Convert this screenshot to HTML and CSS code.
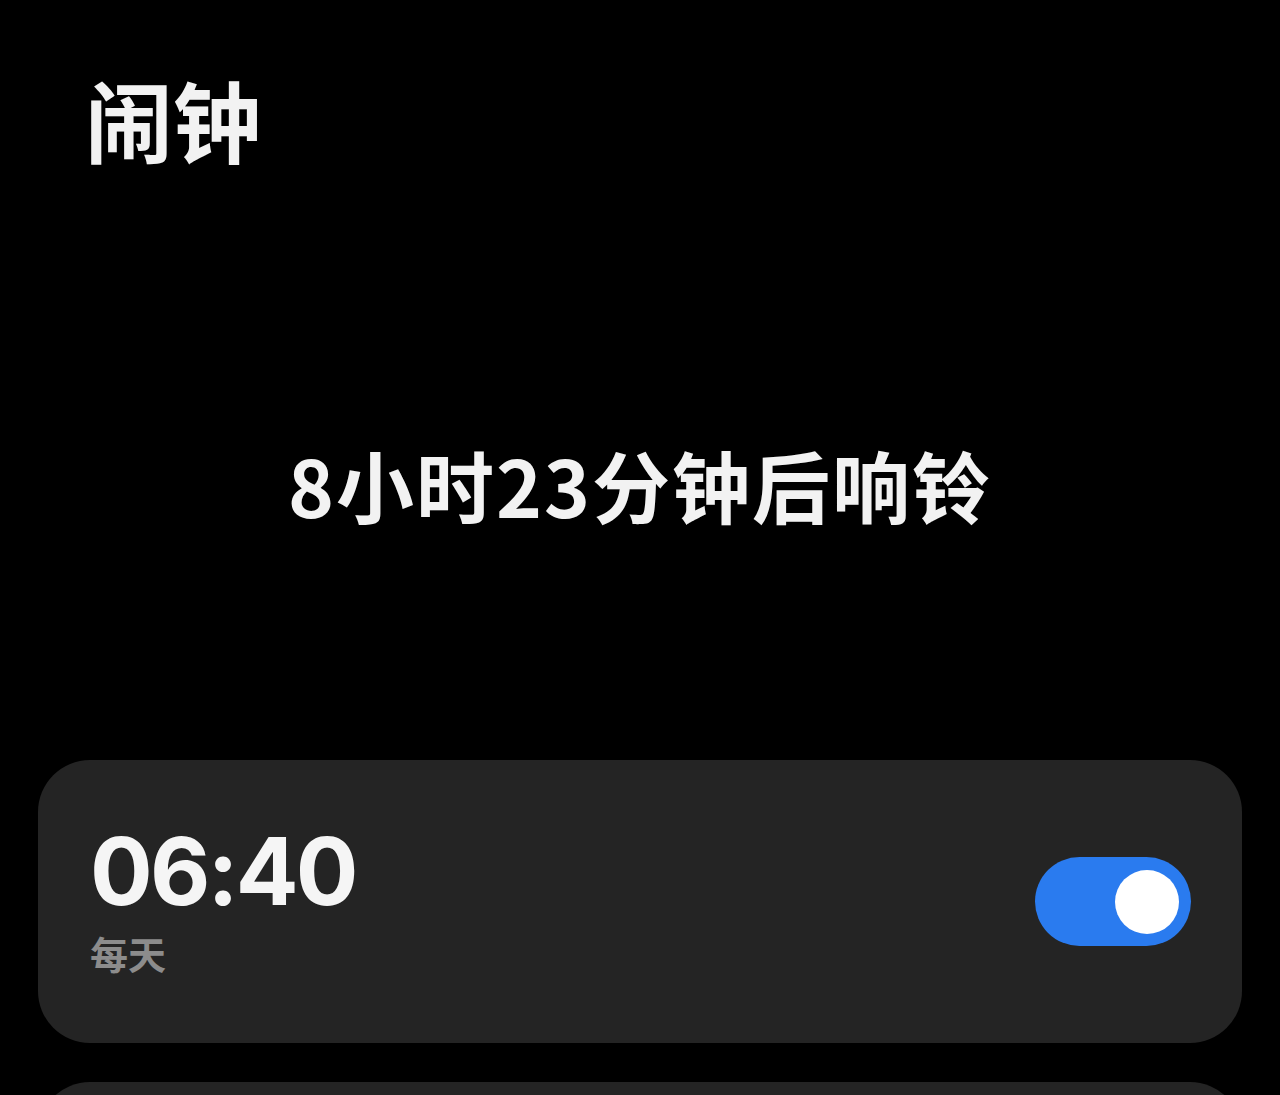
FILE: index.html
```html
<!DOCTYPE html>
<html lang="zh-CN">
<head>
<meta charset="utf-8">
<title>闹钟</title>
<link rel="stylesheet" href="styles.css">
</head>
<body>
<div class="page">
  <h1 class="title">闹钟</h1>
  <div class="countdown">8小时23分钟后响铃</div>
  <div class="list">
    <div class="card">
      <div class="info">
        <div class="time">06:40</div>
        <div class="repeat">每天</div>
      </div>
      <div class="switch on"><span class="knob"></span></div>
    </div>
    <div class="card next"></div>
  </div>
</div>
</body>
</html>
```
FILE: styles.css
```css
html, body {
  margin: 0;
  padding: 0;
  background: #000;
  height: 100%;
  overflow: hidden;
}
.page {
  font-family: "Noto Sans CJK SC", "Noto Sans", sans-serif;
  color: #f2f2f2;
  display: flex;
  flex-direction: column;
}
.title {
  margin: 0;
  padding: 56px 0 0 85px;
  font-size: 88px;
  line-height: 124px;
  font-weight: 700;
  height: 124px;
}
.countdown {
  margin-top: 254px;
  text-align: center;
  font-size: 78px;
  line-height: 100px;
  font-weight: 700;
  letter-spacing: 2px;
  height: 100px;
}
.list {
  margin-top: 226px;
  padding: 0 38px;
  display: flex;
  flex-direction: column;
  gap: 39px;
}
.card {
  background: #242424;
  border-radius: 52px;
  height: 283px;
  display: flex;
  align-items: center;
  justify-content: space-between;
  padding: 0 51px 0 52px;
  box-sizing: border-box;
}
.info {
  display: flex;
  flex-direction: column;
  margin-top: -8px;
}
.time {
  font-family: Inter, "Noto Sans", sans-serif;
  font-weight: 700;
  font-size: 93px;
  line-height: 100px;
  letter-spacing: -2.8px;
  color: #f5f5f5;
}
.repeat {
  margin-top: 10px;
  font-size: 38px;
  line-height: 44px;
  font-weight: 700;
  color: #8c8c8c;
}
.switch {
  width: 156px;
  height: 89px;
  border-radius: 45px;
  background: #2a7bef;
  display: flex;
  align-items: center;
  justify-content: flex-end;
  padding: 0 12px;
  box-sizing: border-box;
}
.knob {
  width: 64px;
  height: 64px;
  border-radius: 50%;
  background: #fff;
}
.next {
  height: 283px;
}
```
